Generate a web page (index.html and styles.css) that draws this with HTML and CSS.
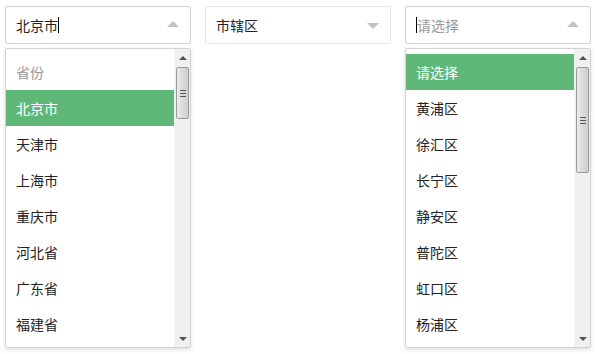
FILE: index.html
```html
<!DOCTYPE html>
<html lang="zh-CN">
<head>
    <meta charset="UTF-8">
    <title>地区选择</title>
    <link rel="stylesheet" href="styles.css">
</head>
<body>
    <div class="selects">
        <div class="select open">
            <div class="select-title">
                <span class="value">北京市</span><span class="caret"></span>
                <i class="arrow"></i>
            </div>
            <div class="dropdown">
                <ul class="options">
                    <li class="tip">省份</li>
                    <li class="selected">北京市</li>
                    <li>天津市</li>
                    <li>上海市</li>
                    <li>重庆市</li>
                    <li>河北省</li>
                    <li>广东省</li>
                    <li>福建省</li>
                </ul>
                <div class="scrollbar">
                    <div class="btn up"></div>
                    <div class="track">
                        <div class="thumb thumb-short"><span class="grip"></span></div>
                    </div>
                    <div class="btn down"></div>
                </div>
            </div>
        </div>

        <div class="select closed">
            <div class="select-title">
                <span class="value">市辖区</span>
                <i class="arrow"></i>
            </div>
        </div>

        <div class="select open">
            <div class="select-title">
                <span class="caret"></span><span class="value placeholder">请选择</span>
                <i class="arrow"></i>
            </div>
            <div class="dropdown">
                <ul class="options">
                    <li class="selected">请选择</li>
                    <li>黄浦区</li>
                    <li>徐汇区</li>
                    <li>长宁区</li>
                    <li>静安区</li>
                    <li>普陀区</li>
                    <li>虹口区</li>
                    <li>杨浦区</li>
                </ul>
                <div class="scrollbar">
                    <div class="btn up"></div>
                    <div class="track">
                        <div class="thumb thumb-long"><span class="grip"></span></div>
                    </div>
                    <div class="btn down"></div>
                </div>
            </div>
        </div>
    </div>
</body>
</html>
```

FILE: styles.css
```css
* {
    box-sizing: border-box;
    margin: 0;
    padding: 0;
}

body {
    font-family: "Noto Sans CJK SC", "Noto Sans", sans-serif;
    font-size: 14px;
    color: #222;
    background-color: #fff;
}

.selects {
    display: flex;
    align-items: flex-start;
    gap: 14px;
    padding: 6px 5px;
}

.select {
    width: 186px;
    display: flex;
    flex-direction: column;
    gap: 4px;
}

.select-title {
    display: flex;
    align-items: center;
    height: 38px;
    padding: 0 10px;
    border: 1px solid #d2d2d2;
    border-radius: 2px;
    background-color: #fff;
}

.closed .select-title {
    border-color: #e6e6e6;
}

.value {
    line-height: 36px;
    color: #222;
}

.placeholder {
    color: #999;
}

.caret {
    display: inline-block;
    width: 1px;
    height: 16px;
    background-color: #000;
}

.arrow {
    margin-left: auto;
    margin-right: 1px;
    width: 0;
    height: 0;
    border-left: 6px solid transparent;
    border-right: 6px solid transparent;
}

.open .arrow {
    border-bottom: 6px solid #c2c2c2;
    margin-top: -2px;
}

.closed .arrow {
    border-top: 6px solid #c2c2c2;
    margin-top: 2px;
}

.dropdown {
    height: 300px;
    display: flex;
    border: 1px solid #d2d2d2;
    border-radius: 2px;
    background-color: #fff;
    box-shadow: 0 2px 4px rgba(0,0,0,0.12);
}

.options {
    flex: 1;
    list-style: none;
    padding-top: 5px;
    overflow: hidden;
}

.options li {
    height: 36px;
    line-height: 36px;
    padding-left: 10px;
    white-space: nowrap;
}

.options .tip {
    color: #999;
}

.options .selected {
    background-color: #5fb878;
    color: #fff;
}

/* fake windows-style scrollbar */
.scrollbar {
    width: 16px;
    display: flex;
    flex-direction: column;
    background-color: #f0f0f0;
    border-left: 1px solid #f4f4f4;
}

.btn {
    height: 17px;
    display: flex;
    align-items: center;
    justify-content: center;
}

.btn::after {
    content: "";
    width: 0;
    height: 0;
    border-left: 4px solid transparent;
    border-right: 4px solid transparent;
}

.up::after {
    border-bottom: 4px solid #505050;
}

.down::after {
    border-top: 4px solid #505050;
}

.track {
    flex: 1;
    padding: 1px 1px 0 1px;
}

.thumb {
    display: flex;
    align-items: center;
    justify-content: center;
    border: 1px solid #9a9a9a;
    border-radius: 2px;
    background: linear-gradient(to right, #ececec, #dcdcdc 45%, #cfcfcf);
}

.thumb-short {
    height: 52px;
}

.thumb-long {
    height: 106px;
}

.grip {
    width: 6px;
    height: 7px;
    border-top: 1px solid #555;
    border-bottom: 1px solid #555;
    position: relative;
}

.grip::after {
    content: "";
    position: absolute;
    left: 0;
    right: 0;
    top: 2px;
    border-top: 1px solid #555;
}
```
